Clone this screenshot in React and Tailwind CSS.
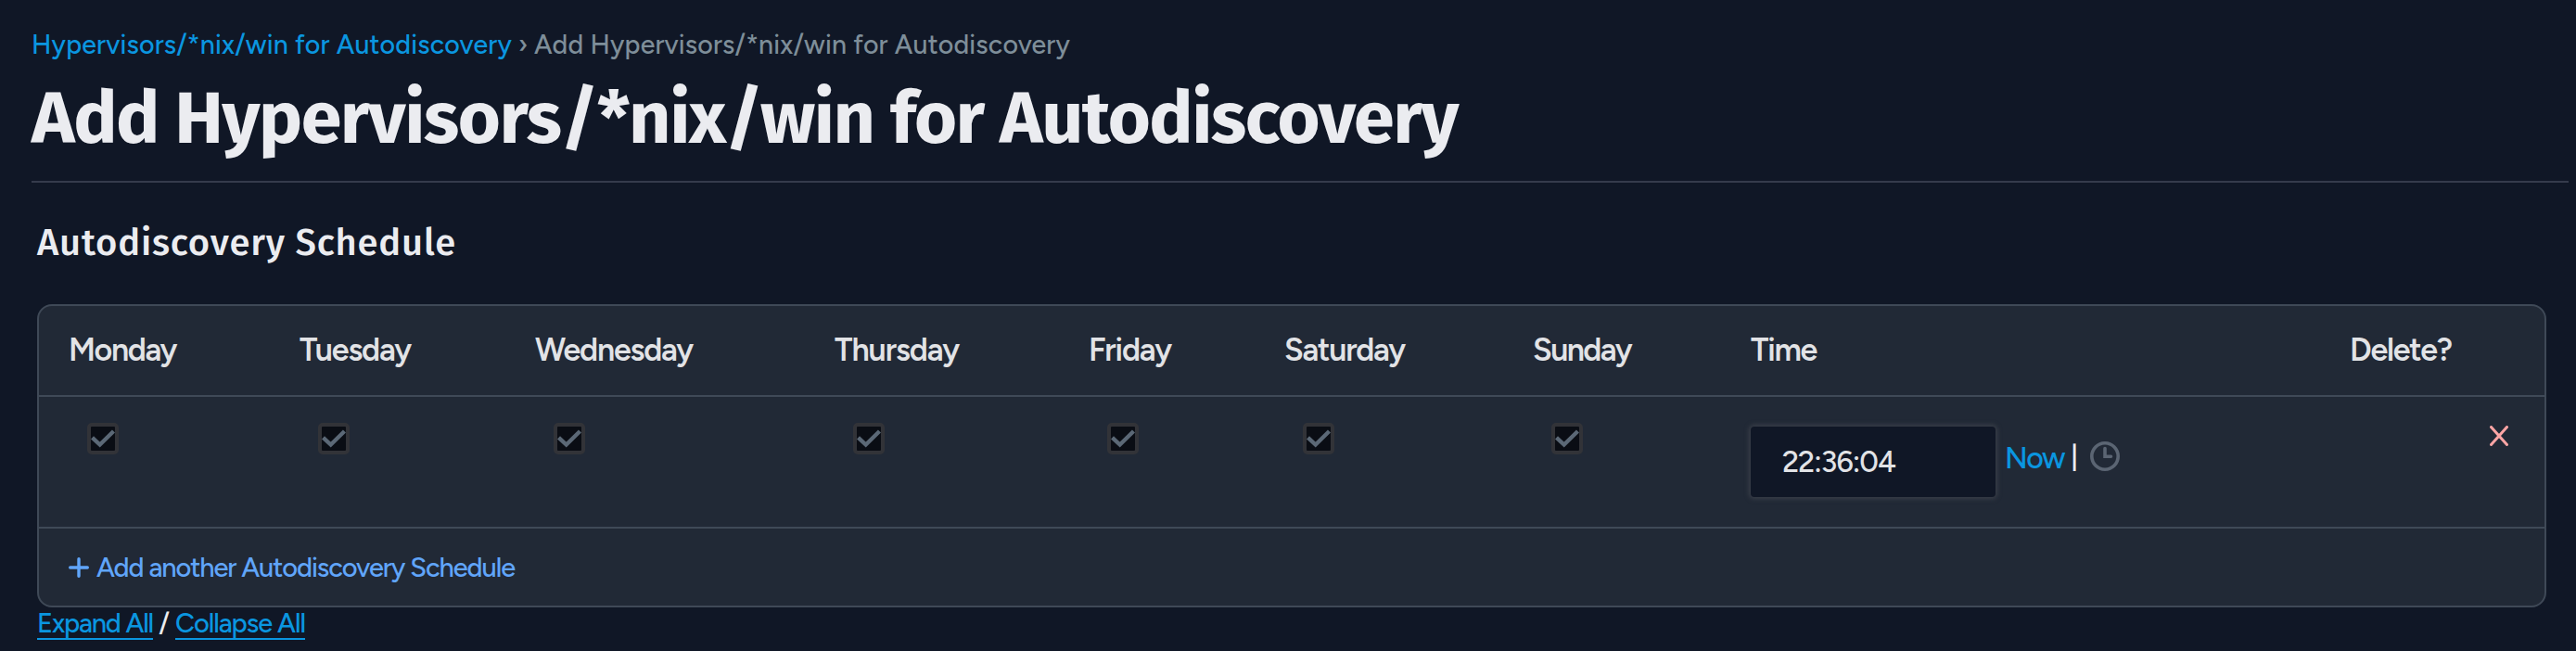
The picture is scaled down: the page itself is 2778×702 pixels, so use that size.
import React, { useLayoutEffect, useRef } from "react";

// Text fitted to a fixed advance width through letter spacing.
function Fit({ w, className = "", children, as: Tag = "span" }) {
  const ref = useRef(null);
  useLayoutEffect(() => {
    const el = ref.current;
    el.style.letterSpacing = "0px";
    const natural = el.getBoundingClientRect().width;
    el.style.letterSpacing = (w - natural) / children.length + "px";
  }, [w, children]);
  return (
    <Tag ref={ref} className={"inline-block whitespace-pre " + className}>
      {children}
    </Tag>
  );
}

const days = [
  { name: "Monday", w: 116, col: "w-[249px]" },
  { name: "Tuesday", w: 120, col: "w-[254px]" },
  { name: "Wednesday", w: 170, col: "w-[323px]" },
  { name: "Thursday", w: 134, col: "w-[274px]" },
  { name: "Friday", w: 89, col: "w-[211px]" },
  { name: "Saturday", w: 130, col: "w-[268px]" },
  { name: "Sunday", w: 106, col: "w-[235px]" },
];

function Checkbox() {
  return (
    <div className="ml-5 flex h-[34px] w-[34px] items-center justify-center rounded-[5px] border-4 border-[#323338] bg-[#0a0d14]">
      <svg viewBox="0 0 26 26" className="h-[26px] w-[26px]" fill="none" stroke="#5b6876" strokeWidth="4.4">
        <path d="M1.5 11.8 L9.7 19.5 L24.5 5" />
      </svg>
    </div>
  );
}

export default function App() {
  return (
    <div className="flex h-[702px] w-[2778px] flex-col overflow-hidden bg-[#101726] font-['Figtree','Inter',sans-serif] font-medium text-[#ebecf0]">
      <nav className="ml-[34px] mt-7 flex h-10 items-center text-[28.5px] leading-10 text-[#7e8e99]">
        <Fit w={518} className="text-[#0a96e0]">Hypervisors/*nix/win for Autodiscovery</Fit>
        <span className="w-[24px] text-center">›</span>
        <Fit w={578}>Add Hypervisors/*nix/win for Autodiscovery</Fit>
      </nav>
      <div className="ml-[34px] mr-2 h-[129px] border-b-2 border-[#353b4c] pt-[15px]">
        <Fit as="h1" w={1538} className="font-['Fira_Sans','Noto_Sans',sans-serif] text-[79px] font-bold leading-[90px]">Add Hypervisors/*nix/win for Autodiscovery</Fit>
      </div>
      <div className="ml-10 h-[131px] pt-[41px]">
        <Fit as="h2" w={452} className="font-['Fira_Sans','Noto_Sans',sans-serif] text-[40px] font-medium leading-[48px]">Autodiscovery Schedule</Fit>
      </div>
      <section className="ml-10 flex h-[327px] w-[2706px] flex-none flex-col rounded-[16px] border-2 border-[#3f4957] bg-[#212936]">
        <div className="flex h-[98px] items-center border-b-2 border-[#3f4957] pl-8 text-[34px] font-semibold leading-10 text-[#e2e3e6]">
          {days.map((d) => (
            <div key={d.name} className={d.col}><Fit w={d.w}>{d.name}</Fit></div>
          ))}
          <div className="w-[646px]"><Fit w={71}>Time</Fit></div>
          <Fit w={110}>Delete?</Fit>
        </div>
        <div className="flex h-[142px] items-start border-b-2 border-[#3f4957] pl-8">
          {days.map((d) => (
            <div key={d.name} className={d.col + " pt-[28px]"}><Checkbox /></div>
          ))}
          <div className="flex w-[646px] pt-8 text-[32px] leading-10">
            <div className="flex h-[76px] w-[264px] items-center rounded-[4px] bg-[#101726] pl-[34px] text-[#e2e3e6] shadow-[0_0_5px_2px_#3a3f49]">
              <Fit w={122}>22:36:04</Fit>
            </div>
            <div className="ml-[10px] flex pt-[14px]">
              <Fit w={64} className="text-[#0a96e0]">Now</Fit>
              <span className="ml-[5px] -mt-[2px] w-3 text-center text-[30px] font-semibold">|</span>
            </div>
            <svg viewBox="0 0 32 32" className="ml-[11px] mt-4 h-8 w-8" fill="none" stroke="#5b6573" strokeWidth="3.6">
              <circle cx="16" cy="16" r="14.2" />
              <path d="M16 7.5 V16.3 H22.5" strokeLinecap="round" />
            </svg>
          </div>
          <svg viewBox="0 0 20 22" className="ml-[151px] mt-[31px] h-[22px] w-5" fill="none" stroke="#fca5a5" strokeWidth="3" strokeLinecap="round">
            <path d="M1.5 1.5 L18.5 20.5 M18.5 1.5 L1.5 20.5" />
          </svg>
        </div>
        <div className="flex flex-1 items-center pl-8 text-[29px] leading-10 text-[#60a5fa]">
          <svg viewBox="0 0 22 22" className="h-[22px] w-[22px]" fill="none" stroke="currentColor" strokeWidth="3.4" strokeLinecap="round">
            <path d="M11 1.7 V20.3 M1.7 11 H20.3" />
          </svg>
          <Fit w={451} className="ml-2">Add another Autodiscovery Schedule</Fit>
        </div>
      </section>
      <div className="ml-10 -mt-px flex text-[29px] leading-9">
        <Fit w={125} className="text-[#0a96e0] underline decoration-2 underline-offset-[6px]">Expand All</Fit>
        <span className="w-6 text-center">/</span>
        <Fit w={140} className="text-[#0a96e0] underline decoration-2 underline-offset-[6px]">Collapse All</Fit>
      </div>
    </div>
  );
}
